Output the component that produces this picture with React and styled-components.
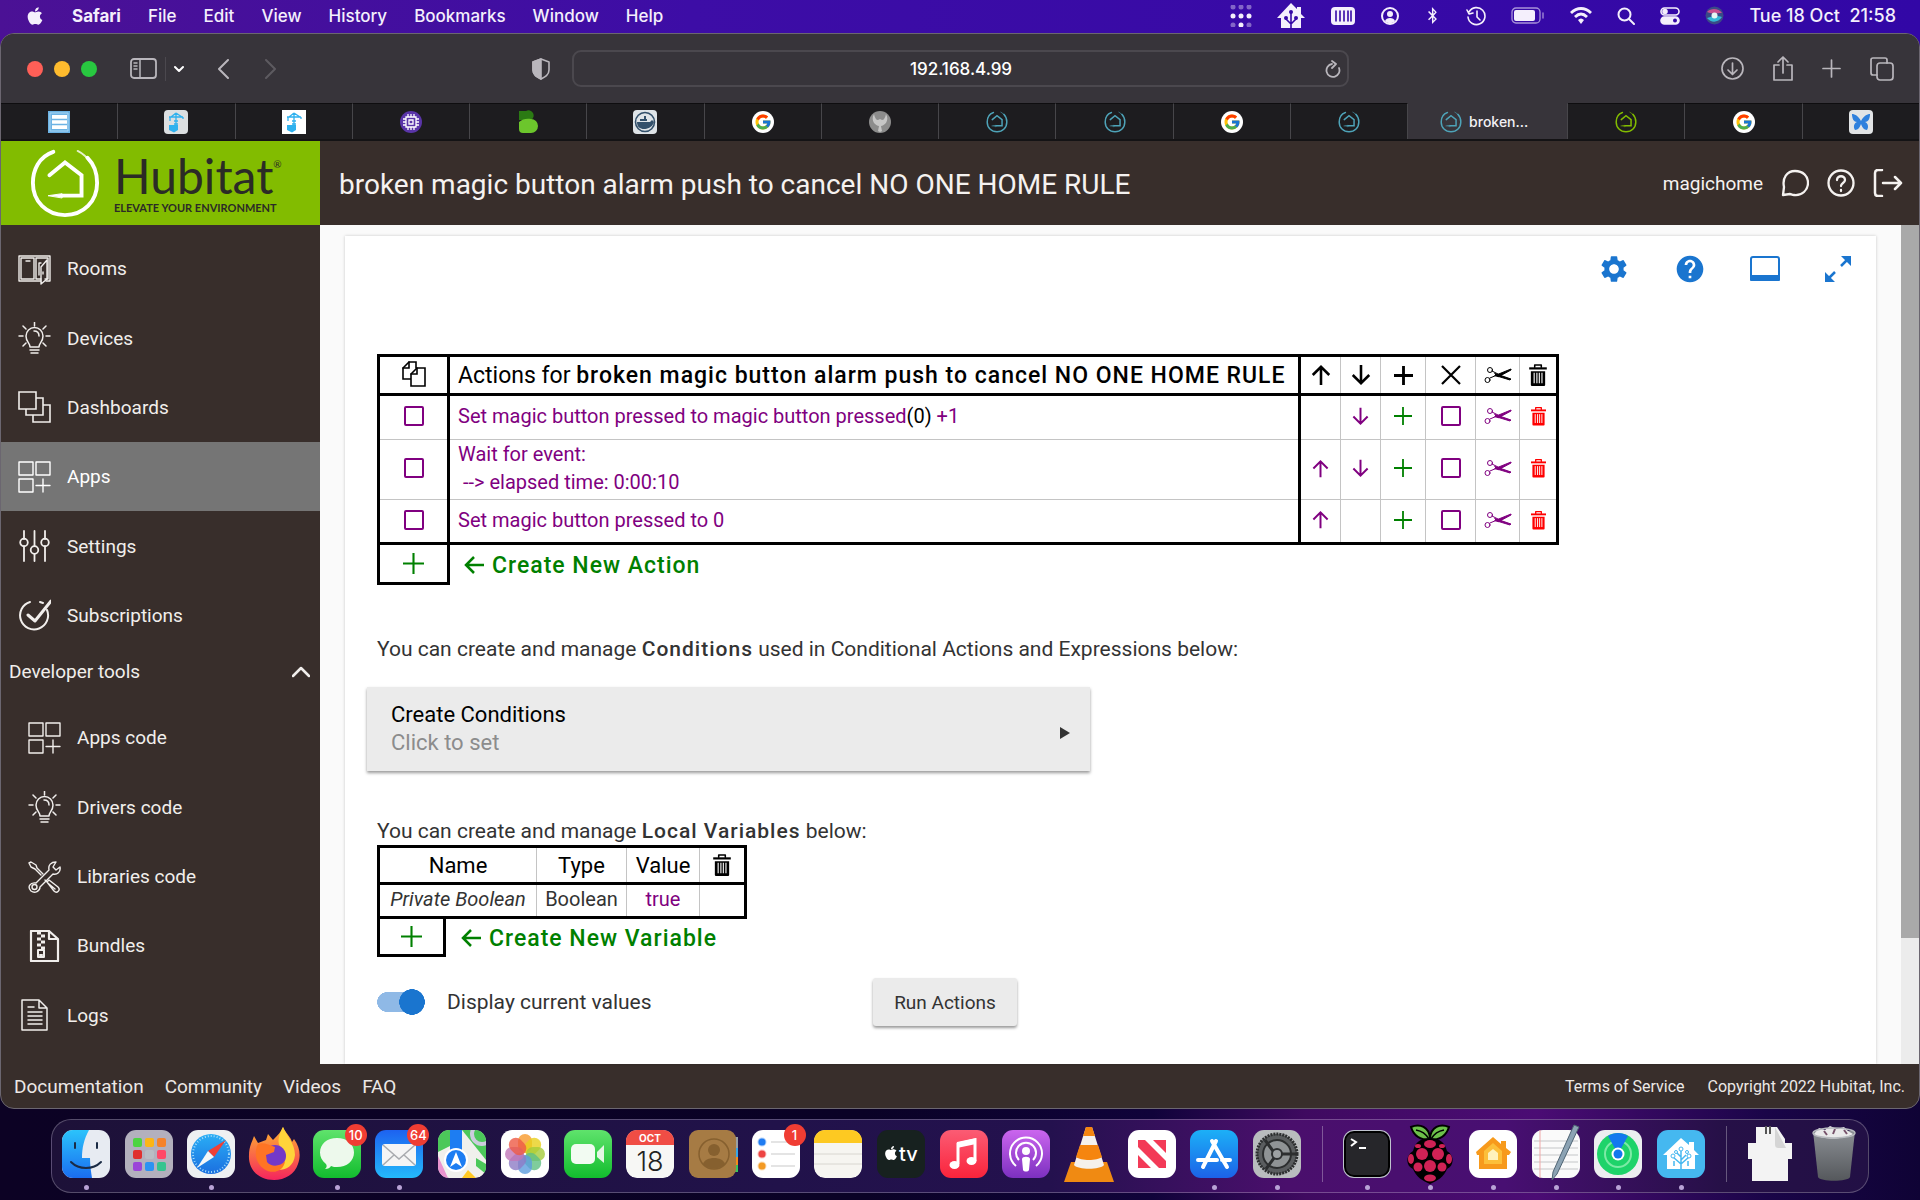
import React from 'react';
import styled, { createGlobalStyle, css } from 'styled-components';
import { FaApple, FaBluetoothB } from 'react-icons/fa';
import { FcGoogle } from 'react-icons/fc';
import { MdSettings, MdHelp } from 'react-icons/md';

const colors = {
  brown: '#382e2b',
  green: '#82bc00',
  blue: '#1a75cf',
  purple: '#800080',
  create: '#008000',
};

const GlobalStyle = createGlobalStyle`
  * { box-sizing: border-box; }
  body { margin: 0; background: #0d0226; font-family: Roboto, sans-serif; }
  button { font: inherit; border: 0; background: none; padding: 0; color: inherit; }
  a { color: inherit; text-decoration: none; }
  svg { display: block; flex: none; }
`;

/* ---------- desktop ---------- */

const Desktop = styled.div`
  min-height: 100vh;
  display: flex;
  flex-direction: column;
  background:
    linear-gradient(90deg, #4b1195 0, #3d0da6 36%, #3207a6 100%) top / 100% 60px no-repeat,
    linear-gradient(90deg, #0c0224 0, #0a0226 45%, #10033a 60%, #3f0a60 68%, #4b0c74 80%, #1a0548 92%, #0f0335 100%);
`;

const MenuBar = styled.header`
  height: 33px;
  display: flex;
  align-items: center;
  justify-content: space-between;
  padding: 0 24px 2px 25px;
  color: #f4effc;
  font: 500 17px Inter, sans-serif;
`;

const MenuGroup = styled.div`
  display: flex;
  align-items: center;
  gap: ${(p) => p.$gap}px;
  white-space: pre;
`;

const AppName = styled.button`
  font-weight: 700;
`;

const Clock = styled.time`
  font-size: 18px;
`;

const Window = styled.div`
  flex: 1;
  display: flex;
  flex-direction: column;
  border: 1px solid #6b6670;
  border-radius: 14px;
  overflow: hidden;
  background: ${colors.brown};
`;

const Toolbar = styled.div`
  height: 69px;
  display: grid;
  grid-template-columns: 1fr minmax(300px, 777px) 1fr;
  align-items: center;
  background: #37343a;
  color: #b9b6bc;
`;

const ToolbarSide = styled.div`
  display: flex;
  align-items: center;
  gap: ${(p) => p.$gap || 0}px;
  padding: 0 ${(p) => (p.$end ? 25 : 21)}px 0 26px;
  justify-content: ${(p) => (p.$end ? 'flex-end' : 'flex-start')};
`;

const Lights = styled.div`
  display: flex;
  gap: 11px;
  margin-right: 33px;
`;

const Light = styled.button`
  width: 16px;
  height: 16px;
  border-radius: 50%;
  background: ${(p) => p.$color};
`;

const SidebarToggle = styled.div`
  display: flex;
  align-items: center;
  gap: 8px;
  margin-right: 33px;
`;

const ThinLine = styled.span`
  width: 1px;
  height: 24px;
  background: #4b484e;
`;

const NavArrows = styled.div`
  display: flex;
  gap: 36px;
  margin-right: auto;
`;

const AddressBar = styled.div`
  height: 37px;
  display: flex;
  align-items: center;
  padding: 0 6px 0 24px;
  border: 2px solid #4b484e;
  border-radius: 9px;
`;

const AddressInput = styled.input`
  flex: 1;
  min-width: 0;
  border: 0;
  background: none;
  color: #fff;
  text-align: center;
  font: 500 17px Inter, sans-serif;
`;

const TabStrip = styled.div`
  height: 38px;
  display: flex;
  background: #1d1c1f;
  border-bottom: 2px solid #141315;
`;

const Tab = styled.button`
  flex: ${(p) => (p.$active ? '0 0 160px' : '1 1 0')};
  padding-right: ${(p) => (p.$active ? 7 : 0)}px;
  display: flex;
  align-items: center;
  justify-content: center;
  gap: 7px;
  color: #f2f0f4;
  font: 500 14px Inter, sans-serif;
  border-right: 1px solid #47464a;
  border-top: 1px solid ${(p) => (p.$active ? '#37343a' : '#0e0d0f')};
  background: ${(p) => (p.$active ? '#37343a' : '#1d1c1f')};
  &:last-child { border-right: 0; }
`;

/* ---------- hubitat page ---------- */

const PageHeader = styled.div`
  height: 84px;
  display: flex;
  align-items: center;
  color: #f5f2f0;
  background: ${colors.brown};
`;

const Logo = styled.a`
  width: 319px;
  height: 100%;
  display: flex;
  align-items: center;
  gap: 13px;
  padding-left: 28px;
  background: ${colors.green};
  color: #2b2b26;
`;

const LogoText = styled.span`
  display: flex;
  flex-direction: column;
  font-family: Lato, sans-serif;
`;

const LogoName = styled.span`
  font-size: 48px;
  line-height: 50px;
`;

const LogoMark = styled.sup`
  font-size: 10px;
  line-height: 10px;
  vertical-align: 26px;
`;

const LogoTag = styled.span`
  font-size: 11px;
  line-height: 14px;
  font-weight: 700;
`;

const PageTitle = styled.h1`
  flex: 1;
  margin: 3px 0 0 19px;
  font-size: 28px;
  font-weight: 400;
`;

const HeaderActions = styled.div`
  display: flex;
  align-items: center;
  gap: 18px;
  padding-right: 16px;
  font-size: 19px;
`;

const Body = styled.div`
  flex: 1;
  display: flex;
`;

const SideNav = styled.nav`
  width: 319px;
  display: flex;
  flex-direction: column;
  padding: 9px 0 14px;
  color: #f1eeec;
`;

const NavItem = styled.a`
  flex: 1;
  display: flex;
  align-items: center;
  gap: 16px;
  padding-left: ${(p) => (p.$child ? 27 : 17)}px;
  font-size: 19px;
  ${(p) => p.$active && css`
    background: #757575;
    color: #fff;
  `}
`;

const NavSection = styled.button`
  height: 53px;
  display: flex;
  justify-content: space-between;
  align-items: center;
  padding: 0 10px 10px 8px;
  font-size: 19px;
`;

const Main = styled.main`
  flex: 1;
  display: flex;
  padding: 11px 25px 0;
  background: #fafafa;
`;

const Card = styled.section`
  flex: 1;
  padding: 17px 24px 20px 32px;
  background: #fff;
  box-shadow: 0 0 3px rgba(0, 0, 0, 0.2);
  color: #333;
  font-size: 21px;
`;

const CardTools = styled.div`
  display: flex;
  align-items: center;
  justify-content: flex-end;
  gap: 44px;
  margin-bottom: 69px;
  color: ${colors.blue};
`;

const ScrollTrack = styled.div`
  width: 18px;
  background: #ececec;
`;

const ScrollThumb = styled.div`
  height: 85%;
  background: #a9a9a9;
`;

const Bold = styled.b`
  font-weight: 500;
  letter-spacing: 1px;
`;

const Table = styled.table`
  border-collapse: collapse;
  white-space: nowrap;
  color: #000;
`;

const Row = styled.tr`
  height: ${(p) => p.$h}px;
`;

const edge = '3px solid #000';

const cell = css`
  padding: 0 8px;
  border: 1px solid #c4c4c4;
  text-align: ${(p) => (p.$left ? 'left' : 'center')};
  width: ${(p) => (p.$w ? `${p.$w}px` : 'auto')};
  ${(p) => p.$icon && 'padding: 0;'}
  ${(p) => p.$boxed && `border-left: ${edge}; border-right: ${edge};`}
  ${(p) => p.$start && `border-left: ${edge};`}
  ${(p) => p.$end && `border-right: ${edge};`}
  ${(p) => p.$bottom && `border-bottom: ${edge};`}
`;

const Th = styled.th`
  ${cell}
  border-top: ${edge};
  border-bottom: ${edge};
  font-size: ${(p) => (p.$left ? 23 : 22)}px;
  font-weight: 400;
  color: #000;
`;

const Td = styled.td`
  ${cell}
  padding-bottom: 3px;
  font-size: 20px;
  line-height: 28px;
  color: ${(p) => p.$color || colors.purple};
`;

const FooterCell = styled.td`
  padding: 2px 0 0 14px;
  border-top: ${edge};
  color: ${colors.create};
`;

const Black = styled.span`
  color: #000;
`;

const CellButton = styled.button`
  display: block;
  margin: 0 auto;
  color: ${(p) => p.$color || 'inherit'};
`;

const CreateLink = styled.button`
  display: flex;
  align-items: center;
  gap: 8px;
  font-size: 23px;
`;

const Box = styled.input`
  appearance: none;
  display: block;
  width: 20px;
  height: 20px;
  margin: 0 auto;
  border: 2px solid ${colors.purple};
  border-radius: 2px;
`;

const Paragraph = styled.p`
  margin: ${(p) => p.$top}px 0 0;
  line-height: 28px;
`;

const ConditionButton = styled.button`
  width: 723px;
  height: 84px;
  margin: 24px 0 0 -10px;
  padding: 0 20px 0 24px;
  display: flex;
  align-items: center;
  justify-content: space-between;
  text-align: left;
  font-size: 22px;
  line-height: 28px;
  color: #000;
  background: #ebebeb;
  box-shadow: 0 2px 3px rgba(0, 0, 0, 0.4);
`;

const ConditionArrow = styled.span`
  padding-top: 8px;
`;

const Muted = styled.span`
  display: block;
  color: #8c8c8c;
`;

const VariablesFooter = styled.div`
  display: flex;
  align-items: center;
  gap: 15px;
  color: ${colors.create};
`;

const VariableAdd = styled.button`
  width: 69px;
  height: 38px;
  display: flex;
  align-items: center;
  justify-content: center;
  border: ${edge};
  border-top: 0;
`;

const OptionsRow = styled.div`
  display: grid;
  grid-template-columns: 496px auto;
  justify-content: start;
  align-items: center;
  margin-top: 21px;
`;

const SwitchLabel = styled.label`
  display: flex;
  align-items: center;
  gap: 22px;
`;

const Switch = styled.input`
  appearance: none;
  width: 48px;
  height: 28px;
  margin: 0;
  background:
    radial-gradient(circle 13px at 35px 14px, ${colors.blue} 97%, transparent),
    linear-gradient(#8fb9e6, #8fb9e6) 10px 4px / 24px 20px no-repeat,
    radial-gradient(circle 10px at 10px 14px, #8fb9e6 97%, transparent);
`;

const RunButton = styled.button`
  width: 144px;
  height: 48px;
  background: #ebebeb;
  border-radius: 3px;
  box-shadow: 0 2px 3px rgba(0, 0, 0, 0.4);
  font-size: 19px;
`;

const Footer = styled.footer`
  height: 44px;
  display: flex;
  align-items: center;
  justify-content: space-between;
  padding: 0 14px 0 13px;
  color: #ece8e6;
`;

const FooterLinks = styled.div`
  display: flex;
  gap: ${(p) => p.$gap}px;
  font-size: ${(p) => p.$size}px;
`;

/* ---------- dock ---------- */

const Dock = styled.div`
  display: flex;
  align-items: center;
  justify-content: space-between;
  height: 74px;
  margin: 10px 51px 7px;
  padding: 0 10px 4px;
  border: 1px solid rgba(255, 255, 255, 0.25);
  border-radius: 20px;
  background: linear-gradient(90deg, #1d1138 0, #21124a 40%, #24114e 55%, #4a0f6c 68%, #480f72 80%, #261047 92%, #221045 100%);
`;

const DockItem = styled.button`
  position: relative;
  width: 48px;
  height: 48px;
`;

const DockLine = styled.span`
  width: 1px;
  height: 56px;
  margin: 0 6px;
  background: rgba(255, 255, 255, 0.3);
`;

const RunningDot = styled.span`
  position: absolute;
  left: 22px;
  top: 55px;
  width: 5px;
  height: 5px;
  border-radius: 50%;
  background: #b9a3d6;
`;

const Badge = styled.span`
  position: absolute;
  right: -6px;
  top: -6px;
  width: 22px;
  height: 22px;
  border-radius: 50%;
  background: #f03d33;
  color: #fff;
  font: 500 13px/22px Inter, sans-serif;
  text-align: center;
`;

/* ---------- icons ---------- */

const Icon = ({ w = 24, h = w, box, sw = 2, children, ...rest }) => (
  <svg width={w} height={h} viewBox={box || `0 0 ${w} ${h}`} fill="none" stroke="currentColor"
    strokeWidth={sw} strokeLinecap="round" strokeLinejoin="round" aria-hidden="true" {...rest}>
    {children}
  </svg>
);

const HubRing = ({ size = 22, color = '#4ea3b8', sw = 5 }) => (
  <Icon w={size} box="0 0 74 72" sw={sw} color={color} strokeLinejoin="miter">
    <path d="M25 4C10 9 4 23 4 36c0 19 14 33 33 33s33-14 33-33c0-11-4-20-10-26" />
    <path d="M50 3c6 3 10 7 13 12" strokeWidth={sw / 2} opacity=".8" />
    <path d="M21 28 37 15l17 13v21H34" />
    <path d="M20 49l14-2v4z" fill="currentColor" strokeWidth="1" />
  </Icon>
);

const ArrowUp = ({ size = 22, sw = 2.5 }) => (
  <Icon w={size} box="0 0 24 24" sw={sw} strokeLinecap="butt" strokeLinejoin="miter"><path d="M12 23V3M3 12l9-9 9 9" /></Icon>
);
const ArrowDown = ({ size = 22, sw = 2.5 }) => (
  <Icon w={size} box="0 0 24 24" sw={sw} strokeLinecap="butt" strokeLinejoin="miter"><path d="M12 1v20M3 12l9 9 9-9" /></Icon>
);
const ArrowLeft = () => (
  <Icon w={20} sw={2.5} strokeLinecap="butt" strokeLinejoin="miter"><path d="M20 10H2M10 2 2 10l8 8" /></Icon>
);
const Plus = ({ size = 20, sw = 2 }) => (
  <Icon w={size} box="0 0 20 20" sw={sw} strokeLinecap="butt"><path d="M10 0v20M0 10h20" /></Icon>
);
const Cross = () => (
  <Icon w={20} sw={2.2} strokeLinecap="butt"><path d="m1 1 18 18M19 1 1 19" /></Icon>
);
const Scissors = () => (
  <Icon w={28} h={16} sw={1}>
    <circle cx="6" cy="3" r="2.500" />
    <circle cx="3.500" cy="13" r="2.500" />
    <path d="m8 4 6 3M6 11l7-3" />
    <path d="M11 8.500 27 2v1L15 9.500zM11 6.500 27 12l-1 1-13-4z" fill="currentColor" />
  </Icon>
);
const Trash = ({ w = 16, h = 20 }) => (
  <Icon w={w} h={h} box="0 0 16 20" sw={1}>
    <path d="M5 3V1h6v2" strokeWidth="1.400" />
    <path d="M0 3h16v2H0z" fill="currentColor" stroke="none" />
    <path d="M1.500 6.500h13V19a1 1 0 0 1-1 1h-11a1 1 0 0 1-1-1z" fill="currentColor" stroke="none" />
    <path d="M4.500 8v9.500M7 8v9.500M9.200 8v9.500M11.600 8v9.500" stroke="#fff" strokeLinecap="butt" />
  </Icon>
);
const Copy = () => (
  <Icon w={24} h={28} sw={1.6} strokeLinejoin="miter">
    <path d="M9 18H1V7l6-6h7v6" /><path d="M1 7h6V1" />
    <path d="M9 13l6-6h8v18H9z" fill="#fff" /><path d="M9 13h6V7" />
  </Icon>
);

const navIcons = {
  rooms: (
    <Icon w={33} h={32} sw={1.4}>
      <path d="M1 3h31v25h-4M1 3v25h22M3 5h13v21H3zM18 5h12v21h-3M18 5v21h5" />
      <path d="M23 31V14l6-7v19zM8 8h4M25 19v2M23 10h-2v12" />
    </Icon>
  ),
  bulb: (
    <Icon w={33} h={32} sw={1.5}>
      <path d="M12 25c0-4-4-5-4-11a8.500 8.500 0 0 1 17 0c0 6-4 7-4 11zM12 28h9M13 31h7M16 9c3 0 5 2 5 5" />
      <path d="M16.500 0v4M5 4l3 3M28 4l-3 3M1 14h4M28 14h4M5 24l3-3M28 24l-3-3" />
    </Icon>
  ),
  boards: (
    <Icon w={33} h={32} sw={1.6} strokeLinejoin="miter">
      <path d="M1 1h17v17H1zM18 7h7v17H8v-6M25 14h7v17H15v-6" />
    </Icon>
  ),
  apps: (
    <Icon w={33} h={32} sw={1.4}>
      <path d="M1 1h14v13H1zM18 1h14v13H18zM1 18h14v13H1zM18 24.500h14M25 18v13" />
    </Icon>
  ),
  sliders: (
    <Icon w={33} h={32} sw={1.8}>
      <path d="M6 1v8M6 16v15M16.500 1v15M16.500 24v7M27 1v8M27 16v15" />
      <circle cx="6" cy="12.500" r="3.800" /><circle cx="16.500" cy="20" r="3.800" /><circle cx="27" cy="12.500" r="3.800" />
    </Icon>
  ),
  check: (
    <Icon w={33} h={32} sw={2}>
      <path d="M12 3a14 14 0 1 0 17 8M22 3l3 1" />
      <path d="m10 16 7 6L33 2" strokeWidth="3" />
    </Icon>
  ),
  tools: (
    <Icon w={33} h={32} sw={1.4}>
      <path d="M8 22 21 9c-1-5 2-8 7-8l-3 5 3 3 4-3c1 5-3 8-7 7L12 26c0 4-5 7-9 4-4-4-1-9 5-8z" />
      <circle cx="6.500" cy="26" r="2.500" />
      <path d="m13 14-6-6-4-2-2-4 2-1 5 3 1 3 6 6M19 21l2-2 9 7c3 3-1 7-4 4zM21 23l6 5M17 19l2 2" />
    </Icon>
  ),
  zip: (
    <Icon w={33} h={32} sw={2.200}>
      <path d="M3 1h18l9 8v22H3zM21 1v8h9" />
      <path d="M9 3h4M13 6h4M9 9h4M13 12h4M9 15h4M13 18h4" strokeWidth="3" strokeLinecap="butt" />
      <path d="M10 20h6v7h-6z" strokeWidth="2" /><path d="M12 25h2" />
    </Icon>
  ),
  log: (
    <Icon w={33} h={32} sw={1.5}>
      <path d="M4 1h17l8 8v22H4zM21 1v8h8M10 8h6M10 13h14M10 17h14M10 21h14M10 25h14" />
    </Icon>
  ),
};

const Favicon = ({ kind }) => {
  if (kind === 'google') {
    return (
      <svg width="22" height="22" viewBox="0 0 22 22">
        <circle cx="11" cy="11" r="11" fill="#fff" />
        <FcGoogle x="2" y="2" width="18" height="18" size={18} />
      </svg>
    );
  }
  if (kind === 'hub') return <HubRing />;
  if (kind === 'hubGreen') return <HubRing color="#82bc00" />;
  return (
    <svg width="24" height="24" viewBox="0 0 24 24">
      {kind === 'list' && (
        <g><rect x="1" y="1" width="22" height="22" fill="#6db3e4" /><rect x="5" y="5" width="15" height="14" fill="#fff" />
          <path d="M5 9.500h15M5 14.500h15" stroke="#6db3e4" strokeWidth="1.500" /><path d="M3 3h18v18H3z" fill="none" stroke="#a9d4f1" /></g>
      )}
      {(kind === 'crane' || kind === 'craneGrey') && (
        <g><rect width="24" height="24" rx={kind === 'crane' ? 0 : 4} fill={kind === 'crane' ? '#fff' : '#dcdfe1'} />
          <path d="M12 17V3M5 7h14M12 3l6 4M6 7v4M12 3 7 7M19 7v2M10 11h4M10 14h4" stroke="#2fb1ee" strokeWidth="1.300" fill="none" />
          <path d="M5 15h9v5l-4 2.500-5-2.500z" fill="#2fb1ee" /></g>
      )}
      {kind === 'chip' && (
        <g><circle cx="12" cy="12" r="11" fill="#5a35a8" /><path d="M7 7h10v10H7zM10 10h4v4h-4zM9 4v3M12 4v3M15 4v3M9 17v3M12 17v3M15 17v3M4 9h3M4 12h3M4 15h3M17 9h3M17 12h3M17 15h3" fill="none" stroke="#fff" strokeWidth="1.300" /></g>
      )}
      {kind === 'bee' && (
        <g><path d="M3 1h7a5 5 0 0 1 5 9H3z" fill="#2b7a13" /><path d="M3 12c3-3 8-4 12-3a6.500 6.500 0 0 1 0 14H7a4 4 0 0 1-4-4z" fill="#6cc62c" /></g>
      )}
      {kind === 'docker' && (
        <g><rect width="24" height="24" rx="4" fill="#dfe4e8" /><circle cx="12" cy="12" r="9.500" fill="none" stroke="#33506b" strokeWidth="1.600" />
          <path d="M4 12h13l2-2 2 2c-2 6-7 7-10 7-4 0-7-2-7-7zM7 9h7v2H7zM11 6h2v3h-2z" fill="#33506b" /></g>
      )}
      {kind === 'eagle' && (
        <g><circle cx="12" cy="12" r="11" fill="#8c8c8c" /><path d="M6 4c-4 7 2 12 5 12l-1 5 2 1 2-1-1-5c3 0 9-5 5-12-1 4-2 6-4 6l-2-1-2 1c-2 0-3-2-4-6z" fill="#c6c6c6" /></g>
      )}
      {kind === 'butterfly' && (
        <g><rect width="24" height="24" rx="4" fill="#e2e4e6" /><path d="M12 11C9 5 5 4 3 4c0 5 2 8 5 8-3 1-4 5-2 8 3 0 5-3 6-6 1 3 3 6 6 6 2-3 1-7-2-8 3 0 5-3 5-8-2 0-6 1-9 7z" fill="#2f80dd" /></g>
      )}
    </svg>
  );
};

const Tile = ({ fill = '#fff' }) => <rect width="48" height="48" rx="11" fill={fill} />;

const dockArt = {
  Finder: (
    <g><Tile fill="#e7ebf2" /><path d="M11 0h16c-5 9-7 18-7 28h8c0 7 1 14 2 20H11A11 11 0 0 1 0 37V11A11 11 0 0 1 11 0z" fill="url(#finder)" />
      <path d="M13 13v5M35 13v5M9 32c8 8 22 8 30 0" stroke="#1b2b45" strokeWidth="2" fill="none" strokeLinecap="round" /></g>
  ),
  Launchpad: (
    <g><Tile fill="#b3b0bd" />
      {['#4cd440', '#fcb515', '#f5822a', '#e0302e', '#b9bdc4', '#ff4867', '#9b45d8', '#2c92f2', '#35c48f'].map((c, i) => (
        <rect key={c} x={8 + (i % 3) * 12} y={8 + Math.floor(i / 3) * 12} width="9" height="9" rx="2" fill={c} />
      ))}</g>
  ),
  Safari: (
    <g><Tile fill="#eef0f2" /><circle cx="24" cy="24" r="20" fill="url(#sky)" /><circle cx="24" cy="24" r="18" fill="none" stroke="#a5dcfb" strokeDasharray="1 2" strokeWidth="2" />
      <path d="M39 10 21 21l6 6z" fill="#ee4037" /><path d="M10 38l17-11-6-6z" fill="#f4f6f8" /></g>
  ),
  Firefox: (
    <g><path d="M24 50C9 50-2 40-1 25-1 17 2 12 4 6l4 7 8-3 2-6 5 6C28 5 31 2 33-3c3 7 8 10 9 15l2-3c6 8 7 17 4 25-3 10-13 16-24 16z" fill="url(#fox)" />
      <path d="M33-3c3 8 12 16 12 28-1 11-9 15-17 15 8-6 9-16 3-22-4-5-3-12 2-21z" fill="#ffd43a" />
      <circle cx="25" cy="26" r="11" fill="#7339c9" /><path d="M8 14c5-2 11 1 17 3l-1 5-8 3 1 7c5 6 14 4 18-1-1 10-12 14-21 8C5 33 4 21 8 14z" fill="#ff7424" /></g>
  ),
  Messages: (
    <g><Tile fill="url(#green)" /><path d="M24 8c10 0 17 6 17 14.500S34 37 24 37c-2 0-4 0-6-1-1 2-3 3-6 3 2-2 2-3 1-5-4-3-6-7-6-11.500C7 14 14 8 24 8z" fill="#edf9ec" /></g>
  ),
  Mail: (
    <g><Tile fill="url(#mail)" /><rect x="7" y="14" width="34" height="22" rx="3" fill="#f5f5f5" /><path d="m8 15 16 14 16-14M8 35l11-10M40 35 29 25" stroke="#a9abaf" strokeWidth="1.500" fill="none" /></g>
  ),
  Maps: (
    <g clipPath="url(#tile)"><Tile fill="#f0f0ec" /><path d="M24 0h24v30z" fill="#4cc85a" /><path d="M0 0h12v16L0 22z" fill="#4cc85a" /><path d="M0 26l10 22H0z" fill="#e993cf" />
      <circle cx="44" cy="4" r="10" fill="none" stroke="#ccd" strokeWidth="4" /><path d="M30 40l8 8H24z" fill="#ffc823" /><path d="m48 34-10-6v8l10 8z" fill="#4cc85a" /><rect x="12" width="12" height="30" fill="#1d7df2" />
      <circle cx="18" cy="30" r="12" fill="#fff" /><circle cx="18" cy="30" r="10" fill="#1d7df2" /><path d="m18 22 6 15-6-4-6 4z" fill="#fff" /></g>
  ),
  Photos: (
    <g><Tile />
      {['#f79a2b', '#e9cf1c', '#a5cc3a', '#5fbf83', '#5c9ede', '#8d7cc6', '#c077b8', '#ee5a45'].map((c, i) => (
        <rect key={c} x="17" y="4" width="14" height="19" rx="7" fill={c} opacity=".8" transform={`rotate(${i * 45} 24 24)`} />
      ))}</g>
  ),
  FaceTime: (
    <g><Tile fill="url(#green)" /><rect x="7" y="14" width="24" height="20" rx="5" fill="#f2fbf2" /><path d="m33 22 7-7v18l-7-6z" fill="#e3f6e4" /></g>
  ),
  Calendar: (
    <g clipPath="url(#tile)"><Tile fill="#f7f7f5" /><rect width="48" height="15" fill="#f04d45" />
      <text x="24" y="12" fontSize="10" fontWeight="700" fill="#fff" textAnchor="middle" fontFamily="Inter, sans-serif">OCT</text>
      <text x="24" y="41" fontSize="27" fontWeight="300" fill="#222" textAnchor="middle" fontFamily="Inter, sans-serif">18</text></g>
  ),
  Contacts: (
    <g><rect x="40" y="7" width="9" height="11" fill="#9aa0a5" /><rect x="40" y="18" width="9" height="9" fill="#38a6e8" /><rect x="40" y="27" width="9" height="8" fill="#f28c1e" /><rect x="40" y="35" width="9" height="7" fill="#3cc45a" />
      <rect width="47" height="48" rx="9" fill="#a67b44" /><circle cx="25" cy="24" r="15" fill="#a67b44" stroke="#86602f" strokeWidth="1.500" /><circle cx="25" cy="20" r="6" fill="#86602f" /><path d="M14 34c2-8 20-8 22 0-6 6-16 6-22 0z" fill="#86602f" /></g>
  ),
  Reminders: (
    <g><Tile />
      {['#1f7cf2', '#ee4443', '#f39a24'].map((c, i) => (
        <g key={c}><circle cx="10" cy={12 + i * 12} r="3.500" fill={c} stroke={c} strokeOpacity=".35" strokeWidth="2" /><path d={`M19 ${12 + i * 12}h24`} stroke="#c9c9c9" /></g>
      ))}</g>
  ),
  Notes: (
    <g clipPath="url(#tile)"><Tile fill="#f6f5f1" /><rect width="48" height="13" fill="#fdc922" /><path d="M0 24h48M0 34h48" stroke="#d8d6d0" /></g>
  ),
  TV: (
    <g><Tile fill="#17211f" /><FaApple x="6" y="15" width="16" height="16" size={16} color="#fff" />
      <text x="22" y="31" fontSize="20" fontWeight="500" fill="#fff" fontFamily="Inter, sans-serif">tv</text></g>
  ),
  Music: (
    <g><Tile fill="url(#music)" /><path d="M18 34V14l17-4v21" stroke="#fff" strokeWidth="3" fill="none" /><path d="M17 12l19-4v6l-19 4z" fill="#fff" /><ellipse cx="14.500" cy="35" rx="5" ry="4" fill="#fff" /><ellipse cx="31.500" cy="31" rx="5" ry="4" fill="#fff" /></g>
  ),
  Podcasts: (
    <g><Tile fill="url(#pod)" /><g fill="none" stroke="#fff" strokeWidth="2"><path d="M14 36a16 16 0 1 1 20 0" /><path d="M17 30a10 10 0 1 1 14 0" /></g><circle cx="24" cy="21" r="4" fill="#fff" /><path d="M20 29c0-3 8-3 8 0l-1 11c-1 2-5 2-6 0z" fill="#fff" /></g>
  ),
  VLC: (
    <g><path d="M6 32h36l7 20H-1z" fill="#f08a12" /><path d="M21-3h6l12 38c-4 5-26 5-30 0z" fill="#f5f1ec" /><path d="M21-3h6l3 9H18zM15 15h18l4 12c-5 4-21 4-26 0z" fill="#f5850f" /></g>
  ),
  News: (
    <g><Tile /><path d="M10 19v19h19zM19 10h19v19z" fill="#f33a57" /><path d="M10 10h28v28H10z" fill="#fff" /><path d="M10 10h7l21 21v7h-7L10 17zM10 25v13h13zM25 10h13v13z" fill="#f33a57" /></g>
  ),
  'App Store': (
    <g><Tile fill="url(#store)" /><path d="M26 11 13 37M22 11l15 26M8 30h19M32 30h8" stroke="#fff" strokeWidth="4" strokeLinecap="round" fill="none" /></g>
  ),
  Settings: (
    <g><Tile fill="#b9bcbe" /><circle cx="24" cy="24" r="20" fill="#5a5d5f" stroke="#2c2e2f" strokeWidth="3" strokeDasharray="2 1" /><circle cx="24" cy="24" r="14" fill="#8f9395" stroke="#2c2e2f" strokeWidth="2" />
      <circle cx="24" cy="24" r="5" fill="#9da1a3" stroke="#2c2e2f" strokeWidth="2" /><path d="m20 21-8-11M29 24h14M21 28l-8 11" stroke="#2c2e2f" strokeWidth="3" /></g>
  ),
  Terminal: (
    <g><Tile fill="#bfc3ce" /><rect x="2" y="2" width="44" height="44" rx="9" fill="#26262a" stroke="#000" strokeWidth="2" /><path d="m8 9 5 3-5 4M16 18h7" stroke="#fff" strokeWidth="2" fill="none" /></g>
  ),
  'Raspberry Pi': (
    <g><path d="M24 10C16 10 8 7 5-3c9-4 18 0 19 11 1-11 10-15 19-11-3 10-11 13-19 13z" fill="#6cc04a" stroke="#000" strokeWidth="2" />
      <path d="M10 0c6 1 10 4 13 9M38 0c-6 1-10 4-13 9" stroke="#000" strokeWidth="1.500" fill="none" />
      <path d="M24 8c10 0 15 5 17 13 8 5 7 15 0 18-3 8-10 12-17 15C17 51 10 47 7 39 0 36-1 26 7 21 9 13 14 8 24 8z" fill="#000" />
      <g fill="#cf2255"><ellipse cx="24" cy="14" rx="6" ry="4" /><circle cx="16" cy="24" r="6" /><circle cx="32" cy="24" r="6" /><circle cx="24" cy="36" r="6" /><circle cx="12" cy="37" r="4.500" /><circle cx="36" cy="37" r="4.500" /><ellipse cx="24" cy="48" rx="6" ry="3.500" /><ellipse cx="5" cy="29" rx="3" ry="5" /><ellipse cx="43" cy="29" rx="3" ry="5" /><ellipse cx="12" cy="16" rx="3" ry="2" /><ellipse cx="36" cy="16" rx="3" ry="2" /></g></g>
  ),
  Home: (
    <g><Tile /><path d="M7 22 24 7l8 7v-3h5v7l5 4-2 3h-2v14H10V25H8z" fill="#f79a1c" /><path d="M15 21l9-8 9 8v13H15z" fill="#fcbf3a" /><path d="M19 23l5-4 5 4v7H19z" fill="#fff2bd" /></g>
  ),
  TextEdit: (
    <g><Tile fill="#fafafa" /><path d="M2 11h44M2 18h44M2 25h44M2 32h44M2 39h44" stroke="#c4c6c8" /><path d="M8 0v48" stroke="#f0a7a7" /><path d="M42-5l5 2-22 47-5 6 1-8z" fill="#8ca3b4" stroke="#4f6474" /></g>
  ),
  'Find My': (
    <g><Tile fill="#eceef0" /><circle cx="24" cy="24" r="21" fill="#1ed36a" /><circle cx="24" cy="24" r="13" fill="none" stroke="#7deaa6" strokeWidth="2" /><path d="M24 24 14 6c6-4 14-4 20 0z" fill="#1378ee" /><circle cx="24" cy="24" r="6.500" fill="#fff" /><circle cx="24" cy="24" r="4.500" fill="#1378ee" /></g>
  ),
  'Home Assistant': (
    <g><Tile fill="#45b8f0" /><path d="M6 25 24 8l8 7v-3h5v8l5 5h-4v14H10V25z" fill="#fff" /><path d="M24 39V20M24 34l-8-7M24 34l8-7M24 27l-4-4M24 30l5-5M17 36v-5M31 36v-5" stroke="#45b8f0" strokeWidth="1.500" /><g fill="#fff" stroke="#45b8f0"><circle cx="24" cy="19" r="2" /><circle cx="16" cy="26" r="2" /><circle cx="32" cy="26" r="2" /><circle cx="19" cy="22" r="1.500" /><circle cx="30" cy="22" r="1.500" /></g></g>
  ),
  Documents: (
    <g><path d="M9-3h21l8 12v4h7v16h-4v22H5V29H1V13h8z" fill="#f3f3f3" /><path d="M28-3v17c0 3 1 4 4 4h7z" fill="#d5d5d5" /><path d="M19-4v8M23-4v8" stroke="#555" strokeWidth="2" /></g>
  ),
  Trash: (
    <g><path d="M3 1h42l-5 46c-2 5-30 5-32 0z" fill="url(#bin)" /><path d="M4 4 9-2l6 2 5-4 7 3 7-2 4 4 5 3c-9 6-32 6-39 0z" fill="#e9e9ea" /><path d="m14 1 3 4M25-1l-2 5M34 0l3 4" stroke="#77536b" strokeWidth="2" /><ellipse cx="24" cy="3" rx="21" ry="5" fill="none" stroke="#b7babf" strokeWidth="1.500" /></g>
  ),
};

const running = ['Finder', 'Safari', 'Messages', 'Mail', 'App Store', 'Settings', 'Terminal', 'Raspberry Pi', 'Home', 'TextEdit', 'Find My', 'Home Assistant'];
const badges = { Messages: 10, Mail: 64, Reminders: 1 };
const dividers = ['Settings', 'Home Assistant'];

const Gradient = ({ id, from, to }) => (
  <linearGradient id={id} x1="0" y1="0" x2="0" y2="1"><stop stopColor={from} /><stop offset="1" stopColor={to} /></linearGradient>
);

const HiddenDefs = styled.svg`
  position: absolute;
`;

const DockDefs = () => (
  <HiddenDefs width="0" height="0">
    <defs>
      <Gradient id="finder" from="#2bc3fb" to="#1a6df0" />
      <Gradient id="sky" from="#2aaef5" to="#1b6fe0" />
      <Gradient id="fox" from="#ffb52e" to="#f5245e" />
      <Gradient id="green" from="#5fe36c" to="#12bd2e" />
      <Gradient id="mail" from="#1d62f0" to="#24b9fb" />
      <Gradient id="music" from="#fb5c74" to="#fa233b" />
      <Gradient id="pod" from="#cb66ee" to="#7c30c0" />
      <Gradient id="store" from="#1cb0f7" to="#1c62e8" />
      <Gradient id="bin" from="#8b8f94" to="#55585c" />
      <clipPath id="tile"><rect width="48" height="48" rx="11" /></clipPath>
    </defs>
  </HiddenDefs>
);

/* ---------- data ---------- */

const menus = ['File', 'Edit', 'View', 'History', 'Bookmarks', 'Window', 'Help'];
const tabs = ['list', 'craneGrey', 'crane', 'chip', 'bee', 'docker', 'google', 'eagle', 'hub', 'hub', 'google', 'hub', 'active', 'hubGreen', 'google', 'butterfly'];

const mainNav = [
  ['Rooms', 'rooms'], ['Devices', 'bulb'], ['Dashboards', 'boards'],
  ['Apps', 'apps'], ['Settings', 'sliders'], ['Subscriptions', 'check'],
];
const devNav = [['Apps code', 'apps'], ['Drivers code', 'bulb'], ['Libraries code', 'tools'], ['Bundles', 'zip']];

const actions = [
  { id: 1, h: 45, text: <>Set magic button pressed to magic button pressed<Black>(0)</Black> +1</>, down: true },
  { id: 2, h: 60, text: <>Wait for event:<br />&nbsp;--&gt; elapsed time: 0:00:10</>, up: true, down: true },
  { id: 3, h: 44, text: 'Set magic button pressed to 0', up: true },
];

const StatusIcons = () => (
  <>
    <Icon w={22} stroke="none" fill="currentColor">
      {[3, 11, 19].map((x) => [2, 11, 20].map((y) => (
        <circle key={`${x}-${y}`} cx={x} cy={y} r="2.500" opacity={y === 11 || (y === 20 && x === 11) ? 1 : 0.4} />
      )))}
    </Icon>
    <Icon w={28} h={26} stroke="none">
      <path d="M0 15 14 0l6 6V4h4v7l4 4h-4v10H4V15z" fill="currentColor" />
      <path d="M14 25V10M14 21l-5-5M14 21l5-5" stroke="#3508a6" strokeWidth="1.600" />
      <g fill="#3508a6"><circle cx="14" cy="9" r="2" /><circle cx="9" cy="15" r="2" /><circle cx="19" cy="15" r="2" /></g>
    </Icon>
    <Icon w={26} h={20} stroke="none">
      <rect x="1" y="1" width="24" height="18" rx="4" fill="currentColor" />
      <path d="M6 5v10M10 5v10M14 5v10M18 5v10M21 5v10" stroke="#3508a6" strokeWidth="1.600" />
    </Icon>
    <Icon w={18}><circle cx="9" cy="9" r="8" /><circle cx="9" cy="7" r="3" fill="currentColor" stroke="none" /><path d="M4 14c1-4 9-4 10 0-3 3-7 3-10 0z" fill="currentColor" stroke="none" /></Icon>
    <FaBluetoothB size={17} />
    <Icon w={20} sw={1.6}><path d="M3 6a8.500 8.500 0 1 1-1 5M1 4l2 4 4-1M11 5v6l3 3" /></Icon>
    <Icon w={34} h={17} sw={1.3}><rect x="1" y="1" width="28" height="15" rx="4" opacity=".6" /><rect x="3" y="3" width="21" height="11" rx="2" fill="currentColor" stroke="none" /><path d="M32 6v5" opacity=".6" /></Icon>
    <Icon w={22} h={18} sw={2.8} strokeLinecap="butt"><path d="M1 6c6-6 14-6 20 0M5 10c4-4 8-4 12 0" /><path d="m11 17-3-4c2-2 4-2 6 0z" fill="currentColor" stroke="none" /></Icon>
    <Icon w={18}><circle cx="7.500" cy="7.500" r="6" /><path d="m12 12 5 5" /></Icon>
    <Icon w={20} h={18} sw={1.600}><rect x="1" y="1" width="18" height="7" rx="3.500" /><circle cx="5" cy="4.500" r="2" fill="currentColor" /><rect x="1" y="10" width="18" height="7" rx="3.500" fill="currentColor" /><circle cx="15" cy="13.500" r="2" fill="#3508a6" stroke="none" /></Icon>
    <Icon w={19} stroke="none"><circle cx="9.500" cy="9.500" r="9" fill="#3a4a86" /><path d="M2 6c5-5 12-3 15 1-5 0-8 2-15-1z" fill="#c94f8f" /><path d="M2 12c4 5 11 5 15-1-6-2-9-1-15 1z" fill="#36b7d6" /><circle cx="9.500" cy="9.500" r="3" fill="#e6f7f4" /></Icon>
  </>
);

const ActionsTable = () => (
  <Table>
    <thead>
      <Row $h={39}>
        <Th $boxed $icon $w={70}><CellButton aria-label="Copy"><Copy /></CellButton></Th>
        <Th $left $w={851}>Actions for <Bold>broken magic button alarm push to cancel NO ONE HOME RULE</Bold></Th>
        <Th $start $icon $w={41}><CellButton aria-label="Move up"><ArrowUp sw={2.8} /></CellButton></Th>
        <Th $icon $w={40}><CellButton aria-label="Move down"><ArrowDown sw={2.8} /></CellButton></Th>
        <Th $icon $w={45}><CellButton aria-label="Insert"><Plus size={19} sw={3} /></CellButton></Th>
        <Th $icon $w={50}><CellButton aria-label="Disable"><Cross /></CellButton></Th>
        <Th $icon $w={44}><CellButton aria-label="Cut"><Scissors /></CellButton></Th>
        <Th $end $icon $w={38}><CellButton aria-label="Delete"><Trash w={18} h={22} /></CellButton></Th>
      </Row>
    </thead>
    <tbody>
      {actions.map((a) => (
        <Row key={a.id} $h={a.h}>
          <Td $boxed $icon><Box type="checkbox" aria-label={`Select action ${a.id}`} /></Td>
          <Td $left>{a.text}</Td>
          <Td $start $icon>{a.up && <CellButton aria-label="Move up"><ArrowUp size={19} /></CellButton>}</Td>
          <Td $icon>{a.down && <CellButton aria-label="Move down"><ArrowDown size={19} /></CellButton>}</Td>
          <Td $icon $color={colors.create}><CellButton aria-label="Insert"><Plus size={18} /></CellButton></Td>
          <Td $icon><Box type="checkbox" aria-label={`Disable action ${a.id}`} /></Td>
          <Td $icon><CellButton aria-label="Cut"><Scissors /></CellButton></Td>
          <Td $end $icon $color="#ff0000"><CellButton aria-label="Delete"><Trash w={15} h={20} /></CellButton></Td>
        </Row>
      ))}
      <Row $h={40}>
        <Th as="td" $boxed $icon><CellButton aria-label="Add action" $color={colors.create}><Plus size={21} /></CellButton></Th>
        <FooterCell colSpan={7}><CreateLink><ArrowLeft /><Bold>Create New Action</Bold></CreateLink></FooterCell>
      </Row>
    </tbody>
  </Table>
);

const VariablesTable = () => (
  <Table>
    <thead>
      <Row $h={37}>
        <Th $start $w={158}>Name</Th>
        <Th $w={90}>Type</Th>
        <Th $w={73}>Value</Th>
        <Th $end $icon $w={46}><CellButton aria-label="Delete"><Trash w={18} h={22} /></CellButton></Th>
      </Row>
    </thead>
    <tbody>
      <Row $h={34}>
        <Td $start $bottom $color="#333"><i>Private Boolean</i></Td>
        <Td $bottom $color="#333">Boolean</Td>
        <Td $bottom>true</Td>
        <Td $end $bottom />
      </Row>
    </tbody>
  </Table>
);

const App = () => (
  <>
    <GlobalStyle />
    <DockDefs />
    <Desktop>
      <MenuBar>
        <MenuGroup $gap={27}>
          <FaApple size={20} />
          <AppName>Safari</AppName>
          {menus.map((m) => <button key={m}>{m}</button>)}
        </MenuGroup>
        <MenuGroup $gap={25}>
          <StatusIcons />
          <Clock>Tue 18 Oct  21:58</Clock>
        </MenuGroup>
      </MenuBar>

      <Window>
        <Toolbar>
          <ToolbarSide>
            <Lights>
              <Light $color="#fe5f57" aria-label="Close" />
              <Light $color="#febb2e" aria-label="Minimise" />
              <Light $color="#28c840" aria-label="Zoom" />
            </Lights>
            <SidebarToggle>
              <Icon w={27} h={21} sw={1.800}><rect x="1" y="1" width="25" height="19" rx="3" /><path d="M10 1v19M4 5h3M4 8h3M4 11h3" strokeWidth="1.500" /></Icon>
              <ThinLine />
              <Icon w={10} h={8} color="#fff"><path d="m1 2 4 4 4-4" /></Icon>
            </SidebarToggle>
            <NavArrows>
              <button aria-label="Back"><Icon w={12} h={20}><path d="m11 1-9 9 9 9" /></Icon></button>
              <button aria-label="Forward"><Icon w={12} h={20} color="#5d5a60"><path d="m1 1 9 9-9 9" /></Icon></button>
            </NavArrows>
            <Icon w={20} h={22} sw={1.600}><path d="M10 1l8 3v8c0 5-4 7-8 9-4-2-8-4-8-9V4z" /><path d="M10 1v20c-4-2-8-4-8-9V4z" fill="currentColor" /></Icon>
          </ToolbarSide>
          <AddressBar>
            <AddressInput defaultValue="192.168.4.99" aria-label="Address" />
            <button aria-label="Reload"><Icon w={16} h={18} sw={1.800}><path d="M7 4a6.500 6.500 0 1 0 7 4M7 1l4 3-4 4" /></Icon></button>
          </AddressBar>
          <ToolbarSide $end $gap={29}>
            <Icon w={23} sw={1.700}><circle cx="11.500" cy="11.500" r="10.500" /><path d="M11.500 6v11M7 13l4.500 4.500L16 13" /></Icon>
            <Icon w={20} h={25} sw={1.700}><path d="M6 9H1v15h18V9h-5M10 17V1M5 6l5-5 5 5" /></Icon>
            <Icon w={19} sw={1.700}><path d="M9.500 1v17M1 9.500h17" /></Icon>
            <Icon w={24} sw={1.700}><rect x="7" y="6" width="16" height="17" rx="3" /><path d="M17 6V3c0-1-1-2-2-2H3C2 1 1 2 1 3v13c0 1 1 2 2 2h4" /></Icon>
          </ToolbarSide>
        </Toolbar>
        <TabStrip>
          {tabs.map((t, i) => (
            <Tab key={i} $active={t === 'active'} aria-label={`Tab ${i + 1}`}>
              {t === 'active' ? <><HubRing />broken...</> : <Favicon kind={t} />}
            </Tab>
          ))}
        </TabStrip>

        <PageHeader>
          <Logo href="#">
            <HubRing size={72} color="#fff" sw={4} />
            <LogoText>
              <LogoName>Hubitat<LogoMark>®</LogoMark></LogoName>
              <LogoTag>ELEVATE YOUR ENVIRONMENT</LogoTag>
            </LogoText>
          </Logo>
          <PageTitle>broken magic button alarm push to cancel NO ONE HOME RULE</PageTitle>
          <HeaderActions>
            magichome
            <button aria-label="Messages"><Icon w={28} sw={2.300}><path d="M2 26 3 18C1 9 6 2 14 2s13 5 13 12-6 13-14 12c-2 0-3-1-4-1z" /></Icon></button>
            <button aria-label="Help"><Icon w={28} sw={2.300}><circle cx="14" cy="14" r="12.500" /><path d="M10 11c0-5 8-5 8 0 0 3-4 3-4 6M14 21v1" /></Icon></button>
            <button aria-label="Log out"><Icon w={30} h={28} sw={2.500}><path d="M9 1H5C3 1 2 2 2 4v20c0 2 1 3 3 3h4M10 14h18M22 8l6 6-6 6" /></Icon></button>
          </HeaderActions>
        </PageHeader>

        <Body>
          <SideNav>
            {mainNav.map(([label, icon]) => (
              <NavItem key={label} href="#" $active={label === 'Apps'}>{navIcons[icon]}{label}</NavItem>
            ))}
            <NavSection>Developer tools<Icon w={18} h={12} sw={2.500}><path d="m1 10 8-8 8 8" /></Icon></NavSection>
            {devNav.map(([label, icon]) => (
              <NavItem key={label} href="#" $child>{navIcons[icon]}{label}</NavItem>
            ))}
            <NavItem href="#">{navIcons.log}Logs</NavItem>
          </SideNav>
          <Main>
            <Card>
              <CardTools>
                <button aria-label="Settings"><MdSettings size={32} /></button>
                <button aria-label="Help"><MdHelp size={32} /></button>
                <button aria-label="Display"><Icon w={30} h={28}><rect x="1" y="2" width="28" height="23" rx="2" /><path d="M1 21h28v4H1z" fill="currentColor" /></Icon></button>
                <button aria-label="Expand"><Icon w={28} sw={2.500} strokeLinecap="butt"><path d="m17 11 6-6M11 17l-6 6" /><path d="M17 1h10v10zM1 17v10h10z" fill="currentColor" stroke="none" /></Icon></button>
              </CardTools>
              <ActionsTable />
              <Paragraph $top={50}>You can create and manage <Bold>Conditions</Bold> used in Conditional Actions and Expressions below:</Paragraph>
              <ConditionButton>
                <span>Create Conditions<Muted>Click to set</Muted></span>
                <ConditionArrow>
                  <Icon w={10} h={12} fill="#333" stroke="none"><path d="M0 0v12l10-6z" /></Icon>
                </ConditionArrow>
              </ConditionButton>
              <Paragraph $top={46}>You can create and manage <Bold>Local Variables</Bold> below:</Paragraph>
              <VariablesTable />
              <VariablesFooter>
                <VariableAdd aria-label="Add variable"><Plus size={21} /></VariableAdd>
                <CreateLink><ArrowLeft /><Bold>Create New Variable</Bold></CreateLink>
              </VariablesFooter>
              <OptionsRow>
                <SwitchLabel><Switch type="checkbox" defaultChecked />Display current values</SwitchLabel>
                <RunButton>Run Actions</RunButton>
              </OptionsRow>
            </Card>
          </Main>
          <ScrollTrack><ScrollThumb /></ScrollTrack>
        </Body>

        <Footer>
          <FooterLinks $size={19} $gap={21}>
            <a href="#">Documentation</a><a href="#">Community</a><a href="#">Videos</a><a href="#">FAQ</a>
          </FooterLinks>
          <FooterLinks $size={16} $gap={23}><a href="#">Terms of Service</a><span>Copyright 2022 Hubitat, Inc.</span></FooterLinks>
        </Footer>
      </Window>

      <Dock>
        {Object.keys(dockArt).map((name) => (
          <React.Fragment key={name}>
            <DockItem aria-label={name}>
              <svg width="48" height="48" viewBox="0 0 48 48" overflow="visible">{dockArt[name]}</svg>
              {badges[name] && <Badge>{badges[name]}</Badge>}
              {running.includes(name) && <RunningDot />}
            </DockItem>
            {dividers.includes(name) && <DockLine />}
          </React.Fragment>
        ))}
      </Dock>
    </Desktop>
  </>
);

export default App;
